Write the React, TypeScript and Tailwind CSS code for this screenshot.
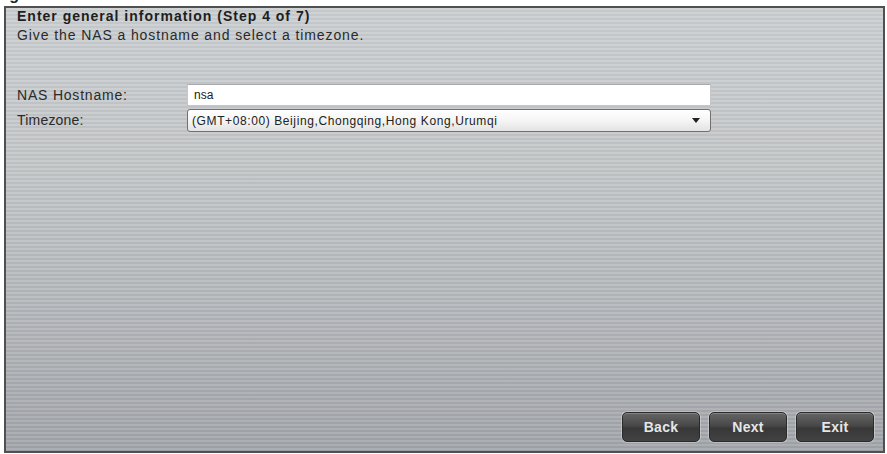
import React from "react";

function WizardButton({ label }: { label: string }) {
  return (
    <button
      type="button"
      className="w-[78px] h-[30px] rounded-[5px] border border-[#2a2a2a] bg-[linear-gradient(180deg,#656565_0%,#484848_45%,#383838_55%,#424242_100%)] shadow-[inset_0_1px_0_rgba(255,255,255,0.2),0_0_0_1px_rgba(255,255,255,0.3)] text-[#e6e6e6] text-[14px] font-bold tracking-[0.3px] flex items-center justify-center"
      style={{ fontFamily: '"Liberation Sans", Arial, sans-serif' }}
    >
      {label}
    </button>
  );
}

export default function App() {
  return (
    <div
      className="w-[887px] h-[454px] bg-white overflow-hidden"
      style={{ fontFamily: '"Liberation Sans", Arial, sans-serif' }}
    >
      <div className="h-[6px] overflow-hidden">
        <div className="ml-[-5px] mt-[-13px] text-[16px] leading-[16px] font-bold text-[#222] whitespace-nowrap">
          Figure
        </div>
      </div>

      <div className="ml-[4px] w-[881px] h-[447px] border-2 border-[#505050] flex flex-col bg-[repeating-linear-gradient(180deg,rgba(255,255,255,0.10)_0px,rgba(255,255,255,0.10)_2px,rgba(0,0,0,0.03)_2px,rgba(0,0,0,0.03)_4px),linear-gradient(180deg,#cbced0_0%,#c3c6c8_35%,#b5b8bb_65%,#a1a4a9_100%)]">
        <div className="pl-[11px] pt-[0px]">
          <div className="text-[14px] leading-[16px] font-bold text-[#1e1e1e] tracking-[1px]">
            Enter general information (Step 4 of 7)
          </div>
          <div className="mt-[3px] text-[14px] leading-[16px] text-[#2a2a2a] tracking-[0.9px]">
            Give the NAS a hostname and select a timezone.
          </div>
        </div>

        <div className="pl-[11px] mt-[41px] flex flex-col gap-[3px]">
          <div className="flex items-center">
            <div className="w-[170px] text-[14px] text-[#2a2a2a] tracking-[0.8px]">
              NAS Hostname:
            </div>
            <div className="w-[524px] h-[22px] bg-white border border-[#c4c6c8] border-t-[#a9acae] flex items-center pl-[6px] text-[12px] text-[#222]">
              nsa
            </div>
          </div>
          <div className="flex items-center">
            <div className="w-[170px] text-[14px] text-[#2a2a2a] tracking-[0.2px]">
              Timezone:
            </div>
            <div className="w-[524px] h-[23px] rounded-[3px] border border-[#707070] bg-[linear-gradient(180deg,#ffffff_0%,#f5f5f5_50%,#e3e3e3_100%)] flex items-center pl-[4px] pr-[10px] text-[12px] text-[#222] tracking-[0.6px]">
              <span className="flex-1 whitespace-nowrap">(GMT+08:00) Beijing,Chongqing,Hong Kong,Urumqi</span>
              <svg width="8" height="5" viewBox="0 0 8 5">
                <path d="M0 0 L8 0 L4 5 Z" fill="#222" />
              </svg>
            </div>
          </div>
        </div>

        <div className="mt-auto flex justify-end gap-[9px] pr-[9px] pb-[9px]">
          <WizardButton label="Back" />
          <WizardButton label="Next" />
          <WizardButton label="Exit" />
        </div>
      </div>
    </div>
  );
}
